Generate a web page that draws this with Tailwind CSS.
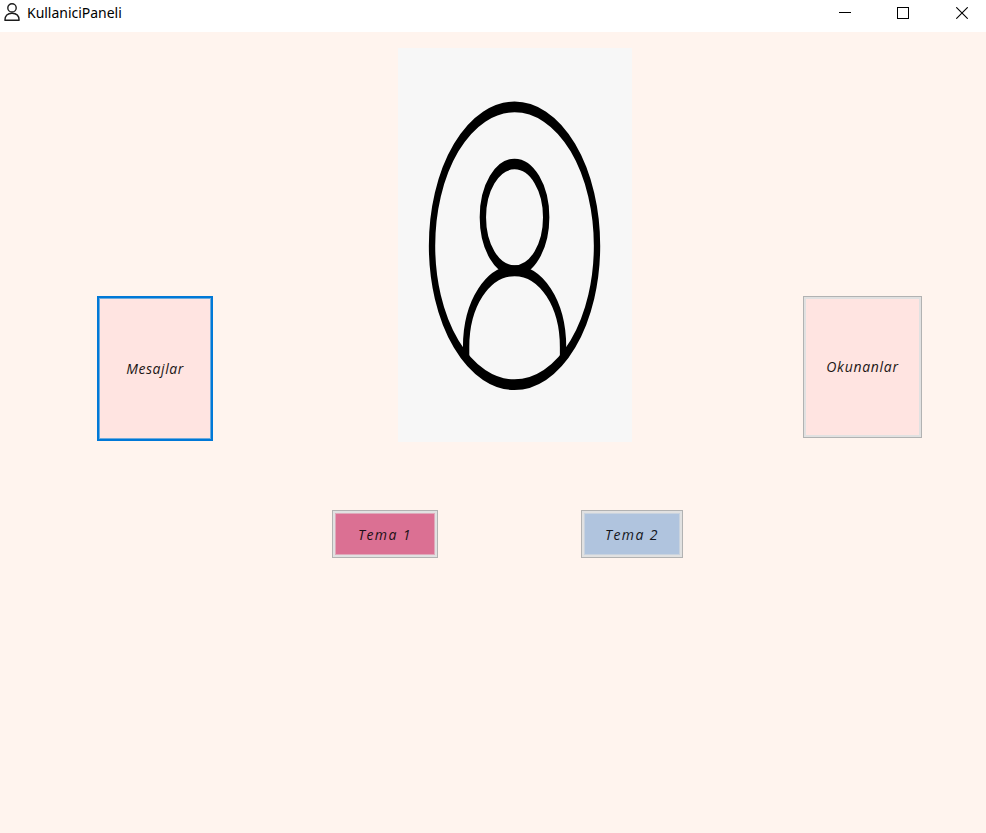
<!DOCTYPE html>
<html lang="tr">
<head>
<meta charset="utf-8">
<title>KullaniciPaneli</title>
<script src="https://cdn.jsdelivr.net/npm/@tailwindcss/browser@4"></script>
</head>
<body class="w-[986px] h-[833px] overflow-hidden flex flex-col bg-[#fff4ee] text-black font-['Open_Sans',sans-serif]">
  <header class="h-8 shrink-0 bg-white flex items-start">
    <svg class="ml-1 mt-[3px] w-4 h-[18px]" viewBox="0 0 16 18" fill="none" stroke="#1c1c1c" stroke-width="1.4">
      <ellipse cx="8" cy="4.9" rx="4.2" ry="4.1"/>
      <path d="M.9 17.2C.9 12.7 3.6 10.3 8 10.3s7.1 2.4 7.1 6.9z" stroke-linejoin="round"/>
    </svg>
    <span class="ml-[7px] mt-[3px] leading-5 text-[14px] tracking-[-0.02px] font-['Noto_Sans',sans-serif] whitespace-nowrap">KullaniciPaneli</span>
    <div class="ml-auto mr-[18px] mt-[7px] flex">
      <svg class="w-3 h-3 mr-[46px]" viewBox="0 0 12 12"><path d="M0 5.5H12" stroke="#000"/></svg>
      <svg class="w-3 h-3 mr-[47px]" viewBox="0 0 12 12"><rect x=".5" y=".5" width="11" height="11" fill="none" stroke="#000"/></svg>
      <svg class="w-3 h-3" viewBox="0 0 12 12"><path d="M.3.3 11.7 11.7M11.7.3.3 11.7" stroke="#000" stroke-width="1.1"/></svg>
    </div>
  </header>
  <main>
    <div class="flex items-start pl-[97px] pr-16 pt-4">
      <button class="mt-[248px] w-[116px] h-[145px] border-2 border-[#0078d7] bg-[#ffe4e1] flex items-center justify-center pb-px text-[14px] italic tracking-[0.55px] text-[#1c1616] outline-1 -outline-offset-3 outline-[#6fabdc]">Mesajlar</button>
      <svg class="ml-[185px] w-[234px] h-[394px] bg-[#f7f7f7]" viewBox="0 0 394 394" preserveAspectRatio="none" fill="none" stroke="#000" stroke-width="10.7">
        <circle cx="196.2" cy="197.8" r="138.9"/>
        <circle cx="196.2" cy="169.3" r="53.3"/>
        <path d="M114.7 310V299C114.7 255 152 222.8 196.2 222.8S277.9 255 277.9 299V310"/>
      </svg>
      <button class="ml-auto mt-[248px] w-[119px] h-[142px] border border-[#b2b2b2] bg-[#ffe4e1] flex items-center justify-center pb-px text-[14px] italic tracking-[0.7px] text-[#1c1616] outline-2 -outline-offset-3 outline-[#e1e1e1]">Okunanlar</button>
    </div>
    <div class="flex pl-[332px] pt-[68px] gap-[143px]">
      <button class="w-[106px] h-12 border border-[#b2b2b2] bg-[#e1e1e1] p-0.5"><span class="h-full flex items-center justify-center bg-[#db7093] border border-[#dfa9ba] text-[14px] italic tracking-[1.4px] text-[#1c1016]">Tema 1</span></button>
      <button class="w-[102px] h-12 border border-[#b2b2b2] bg-[#e1e1e1] p-0.5"><span class="h-full flex items-center justify-center bg-[#b0c4de] border border-[#c9d3df] text-[14px] italic tracking-[1.4px] text-[#14161c]">Tema 2</span></button>
    </div>
  </main>
</body>
</html>
